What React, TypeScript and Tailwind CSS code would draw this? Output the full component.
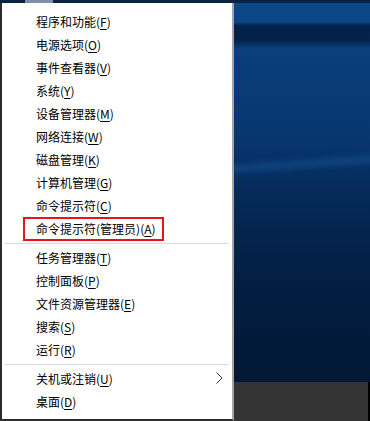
import React from 'react';

type Item = { label: string; key: string; highlight?: boolean; submenu?: boolean };

const groups: Item[][] = [
  [
    { label: '程序和功能', key: 'F' },
    { label: '电源选项', key: 'O' },
    { label: '事件查看器', key: 'V' },
    { label: '系统', key: 'Y' },
    { label: '设备管理器', key: 'M' },
    { label: '网络连接', key: 'W' },
    { label: '磁盘管理', key: 'K' },
    { label: '计算机管理', key: 'G' },
    { label: '命令提示符', key: 'C' },
    { label: '命令提示符(管理员)', key: 'A', highlight: true },
  ],
  [
    { label: '任务管理器', key: 'T' },
    { label: '控制面板', key: 'P' },
    { label: '文件资源管理器', key: 'E' },
    { label: '搜索', key: 'S' },
    { label: '运行', key: 'R' },
  ],
  [
    { label: '关机或注销', key: 'U', submenu: true },
    { label: '桌面', key: 'D' },
  ],
];

const MenuRow: React.FC<{ item: Item }> = ({ item }) => (
  <div className="relative flex items-center h-[23px] pl-[34px] pr-3 text-[12px] leading-[23px] text-black">
    {item.highlight && (
      <div className="absolute left-[21px] top-0 w-[141px] h-[24px] border-2 border-[#e8141c]" />
    )}
    <span>
      {item.label}(<span className="underline underline-offset-2">{item.key}</span>)
    </span>
    {item.submenu && (
      <svg className="absolute left-[214px] top-[5px]" width="7" height="12" viewBox="0 0 7 12">
        <polyline points="0.5,0.5 6,6 0.5,11.5" fill="none" stroke="#3a2f6a" strokeWidth="1" />
      </svg>
    )}
  </div>
);

const Separator = () => (
  <div className="h-[6px] flex items-center px-[3px]">
    <div className="h-px w-full bg-[#dcdcdc]" />
  </div>
);

export default function App() {
  return (
    <div
      className="w-[370px] h-[421px] flex flex-col overflow-hidden bg-[#e6e6e6]"
      style={{ fontFamily: '"Noto Sans CJK SC", "Noto Sans", sans-serif' }}
    >
      <div className="h-[3px] flex bg-[#0a2244]">
        <div className="ml-[25px] w-[28px] bg-[#7d8ea6]" />
      </div>
      <div className="flex flex-1 min-h-0">
        <div className="w-[234px] bg-white border-l-2 border-l-[#2b2b2b] border-r-2 border-r-[#a3a3a3] border-b-2 border-b-[#2e2e2e] pt-[7px]">
          {groups.map((g, i) => (
            <React.Fragment key={i}>
              {i > 0 && <Separator />}
              {g.map((item) => (
                <MenuRow key={item.label} item={item} />
              ))}
            </React.Fragment>
          ))}
        </div>
        <div className="flex-1 flex flex-col">
          <div className="relative flex-1 bg-[linear-gradient(180deg,#0b4887_0%,#0b4685_5%,#03214a_6%,#03234c_10%,#0a3f7c_12%,#073670_35%,#052a5a_50%,#031f45_70%,#021834_100%)] overflow-hidden">
            <div className="absolute left-[-10px] top-[158px] w-[160px] h-[6px] bg-[#1b5a98] opacity-60 blur-[3px] -rotate-[4deg]" />
          </div>
          <div className="h-[39px] flex">
            <div className="flex-1 bg-[#333333]" />
            <div className="w-[2px] bg-black" />
          </div>
        </div>
      </div>
    </div>
  );
}
